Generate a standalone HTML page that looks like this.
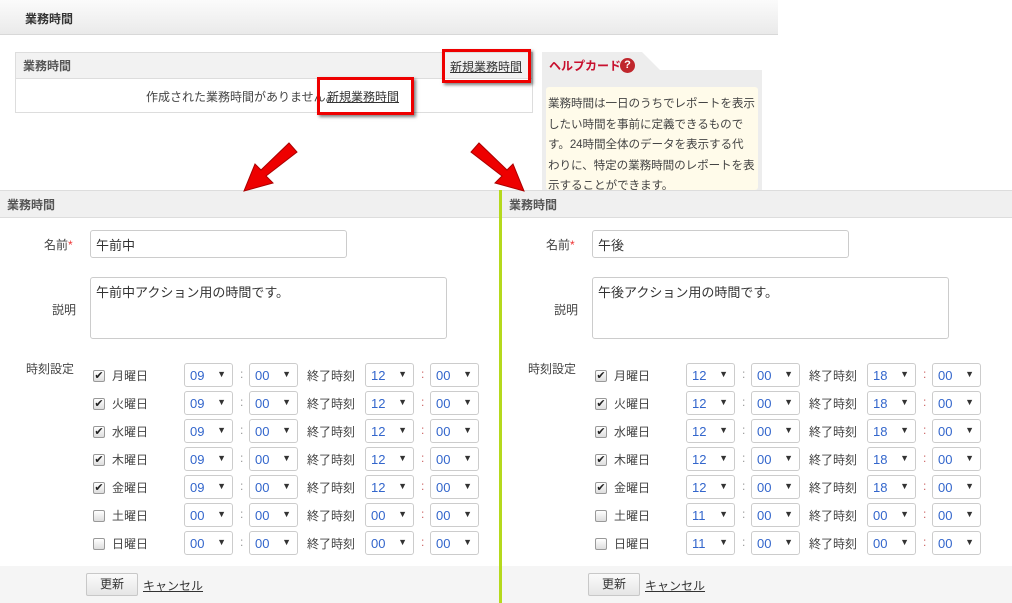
<!DOCTYPE html>
<html><head><meta charset="utf-8"><style>
*{box-sizing:border-box;margin:0;padding:0}
body{width:1012px;height:603px;overflow:hidden;background:#fff;font-family:"Liberation Sans","Noto Sans CJK JP",sans-serif;font-size:12px;color:#333;position:relative}
.abs{position:absolute}
.topbar{left:0;top:0;width:778px;height:35px;background:linear-gradient(#fbfbfb,#eaeaea);border-bottom:1px solid #d8d8d8}
.red{border:3px solid #e00;box-shadow:2px 2px 3px rgba(0,0,0,.5)}
a{color:#333;text-decoration:underline}
.panel{top:190px;width:508px;height:413px;background:#fff}
.ph{left:0;top:0;width:100%;height:28px;background:#f0f0f0;border-top:1px solid #ddd;border-bottom:1px solid #ddd;font-weight:bold;color:#555;font-size:12px;padding:5px 0 0 7px}
.inp{border:1px solid #ccc;border-radius:3px;background:#fff;font-size:13px;padding:4px 5px}
.lbl{font-size:12px;color:#444}
.sel{position:absolute;width:49px;height:24px;border:1px solid #ccc;border-radius:3px;background:#fff;font-size:13px;color:#36c;padding:4px 5px}
.sel:after{content:"▼";position:absolute;right:6px;top:5px;font-size:9px;color:#333}
.cb{position:absolute;width:12px;height:12px;border:1px solid #999;border-radius:2px;background:linear-gradient(#fff,#ddd);font-size:11px;line-height:10px;text-align:center;color:#222}
.foot{left:0;top:376px;width:100%;height:37px;background:#f5f5f5}
.btn{position:absolute;left:86px;top:7px;width:52px;height:23px;border:1px solid #c8c8c8;border-radius:2px;background:linear-gradient(#fafafa,#e6e6e6);font-size:12px;text-align:center;line-height:21px}
</style></head><body>
<div class="abs topbar"></div>
<div class="abs" style="left:25px;top:10px;font-weight:bold;font-size:12px;color:#333">業務時間</div>
<div class="abs" style="left:15px;top:52px;width:518px;height:61px;border:1px solid #ddd"></div>
<div class="abs" style="left:16px;top:53px;width:516px;height:26px;background:#f2f2f2;border-bottom:1px solid #ddd"></div>
<div class="abs" style="left:23px;top:57px;font-weight:bold;color:#555">業務時間</div>
<div class="abs" style="left:146px;top:88px;color:#444">作成された業務時間がありません。</div>
<div class="abs red" style="left:442px;top:49px;width:89px;height:34px"></div>
<div class="abs" style="left:450px;top:58px"><a>新規業務時間</a></div>
<div class="abs red" style="left:317px;top:77px;width:97px;height:38px"></div>
<div class="abs" style="left:327px;top:88px"><a>新規業務時間</a></div>
<!-- help card -->
<svg class="abs" style="left:542px;top:52px" width="222" height="140"><path d="M0 0H100L118 18H220V140H0Z" fill="#ededed"/></svg>
<div class="abs" style="left:549px;top:57px;color:#c8102e;font-weight:bold;font-size:12px">ヘルプカード</div>
<div class="abs" style="left:620px;top:58px;width:15px;height:15px;border-radius:50%;background:#c0272d;color:#fff;font-size:11px;font-weight:bold;text-align:center;line-height:15px">?</div>
<div class="abs" style="left:546px;top:87px;width:212px;height:103px;background:#fffbea;border-radius:3px;padding:7px 2px;font-size:11.6px;letter-spacing:-0.1px;line-height:20.5px;color:#444;white-space:nowrap;overflow:hidden">業務時間は一日のうちでレポートを表示<br>したい時間を事前に定義できるもので<br>す。24時間全体のデータを表示する代<br>わりに、特定の業務時間のレポートを表<br>示することができます。</div>
<!-- panels -->
<div class="abs panel" style="left:0;width:500px"></div>
<div class="abs" style="left:499px;top:190px;width:5px;height:413px;background:#b5d91d"></div>
<div id="L"></div>
<script>
function panel(x,name,desc,sh,wk){
 let h=`<div class="abs panel" style="left:${x}px;width:${x?510:499}px">
 <div class="abs ph">業務時間</div>
 <div class="abs lbl" style="left:44px;top:46px">名前<span style="color:#e33">*</span></div>
 <div class="abs inp" style="left:90px;top:40px;width:257px;height:28px">${name}</div>
 <div class="abs lbl" style="left:52px;top:111px">説明</div>
 <div class="abs inp" style="left:90px;top:87px;width:357px;height:62px">${desc}</div>
 <div class="abs lbl" style="left:26px;top:170px">時刻設定</div>`;
 const days=["月","火","水","木","金","土","日"];
 days.forEach((d,i)=>{const y=173+i*28;const on=i<5;
  h+=`<div class="cb" style="left:93px;top:${y+7}px">${on?'✔':''}</div>
  <div class="abs lbl" style="left:112px;top:${y+4}px;font-size:12px">${d}曜日</div>
  <div class="sel" style="left:184px;top:${y}px">${on?sh:wk}</div>
  <div class="abs" style="left:240px;top:${y+4}px;color:#999">:</div>
  <div class="sel" style="left:249px;top:${y}px">00</div>
  <div class="abs lbl" style="left:307px;top:${y+4}px">終了時刻</div>
  <div class="sel" style="left:365px;top:${y}px">${on?(sh=='09'?'12':'18'):'00'}</div>
  <div class="abs" style="left:421px;top:${y+4}px;color:#c66">:</div>
  <div class="sel" style="left:430px;top:${y}px">00</div>`;});
 h+=`<div class="abs foot"><div class="btn">更新</div><div class="abs" style="left:143px;top:11px"><a>キャンセル</a></div></div></div>`;
 return h;}
document.getElementById('L').innerHTML=panel(0,'午前中','午前中アクション用の時間です。','09','00')+panel(502,'午後','午後アクション用の時間です。','12','11');
</script>
<!-- arrows -->
<svg class="abs" style="left:0;top:0" width="1012" height="603">
<g fill="#e00" stroke="#a00" stroke-width="1">
<path d="M289 143 L297 152 L266 176 L273 183 L244 191 L255 164 L261 170 Z"/>
<path d="M479 143 L471 152 L502 176 L495 183 L524 191 L513 164 L507 170 Z"/>
</g></svg>
</body></html>
